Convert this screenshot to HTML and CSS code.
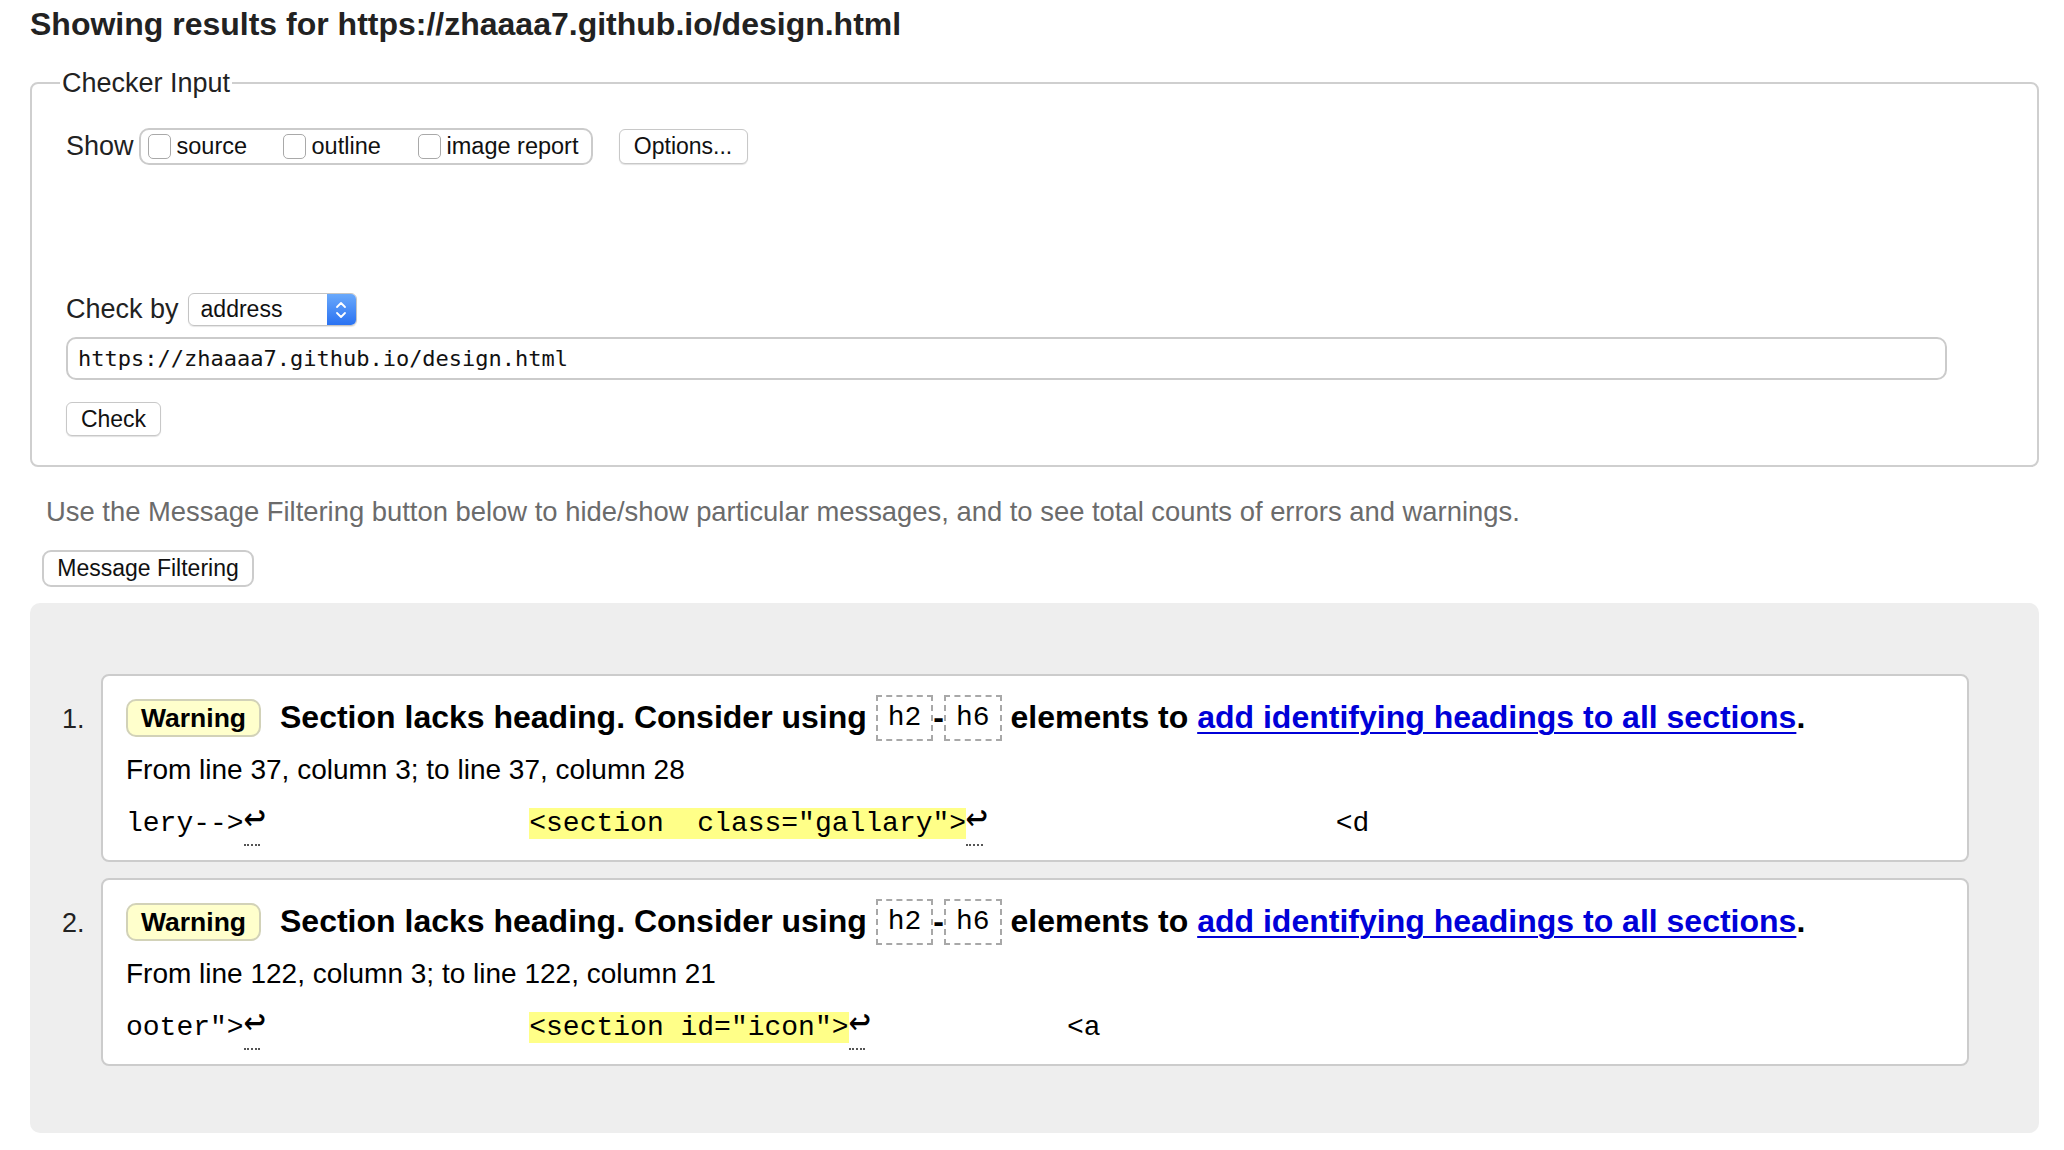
FILE: index.html
```html
<!DOCTYPE html>
<html lang="en">
<head>
<meta charset="utf-8">
<title>Showing results for https://zhaaaa7.github.io/design.html</title>
<link rel="stylesheet" href="styles.css">
</head>
<body>
<h1 class="title">Showing results for https://zhaaaa7.github.io/design.html</h1>

<fieldset class="checker">
  <legend>Checker Input</legend>
  <div class="show-row">
    <span class="show-label">Show</span>
    <div class="show-group">
      <label class="opt"><span class="cb"></span>source</label>
      <label class="opt"><span class="cb"></span>outline</label>
      <label class="opt last"><span class="cb"></span>image report</label>
    </div>
    <button class="btn options-btn">Options...</button>
  </div>

  <div class="checkby-row">
    <span class="checkby-label">Check by</span>
    <div class="select">
      <span class="select-text">address</span>
      <span class="select-arrow">
        <svg width="12" height="20" viewBox="0 0 12 20" fill="none" stroke="#fff" stroke-width="1.8" stroke-linecap="round" stroke-linejoin="round">
          <path d="M2 7 L6 3 L10 7"/>
          <path d="M2 13 L6 17 L10 13"/>
        </svg>
      </span>
    </div>
  </div>

  <div class="url">https://zhaaaa7.github.io/design.html</div>

  <button class="btn check-btn">Check</button>
</fieldset>

<p class="info">Use the Message Filtering button below to hide/show particular messages, and to see total counts of errors and warnings.</p>

<button class="btn filter-btn">Message Filtering</button>

<ol class="results">
  <li class="item">
    <span class="num">1.</span>
    <div class="card">
      <p class="msg"><span class="badge">Warning</span>Section lacks heading. Consider using <code class="tag">h2</code>-<code class="tag">h6</code> elements to <a href="#" class="link">add identifying headings to all sections</a>.</p>
      <p class="where">From line 37, column 3; to line 37, column 28</p>
      <p class="extract">lery--&gt;<b class="lf"><i class="lf-glyph">↩</i></b>                <mark>&lt;section  class="gallary"&gt;</mark><b class="lf"><i class="lf-glyph">↩</i></b>                     &lt;d</p>
    </div>
  </li>
  <li class="item">
    <span class="num">2.</span>
    <div class="card">
      <p class="msg"><span class="badge">Warning</span>Section lacks heading. Consider using <code class="tag">h2</code>-<code class="tag">h6</code> elements to <a href="#" class="link">add identifying headings to all sections</a>.</p>
      <p class="where">From line 122, column 3; to line 122, column 21</p>
      <p class="extract">ooter"&gt;<b class="lf"><i class="lf-glyph">↩</i></b>                <mark>&lt;section id="icon"&gt;</mark><b class="lf"><i class="lf-glyph">↩</i></b>            &lt;a</p>
    </div>
  </li>
</ol>
</body>
</html>
```

FILE: styles.css
```css
body {
  margin: 0;
  font-family: "Liberation Sans", Arial, Helvetica, sans-serif;
  color: #111;
  background: #fff;
}

.title {
  margin: 6px 0 0 30px;
  font-size: 32px;
  line-height: 36px;
  font-weight: bold;
  color: #222;
}

.checker {
  margin: 25px 0 0 30px;
  width: 2009px;
  box-sizing: border-box;
  border: 2px solid #cfcfcf;
  border-radius: 8px;
  padding: 29px 34px 29px;
  min-inline-size: 0;
}

.checker legend {
  font-size: 27px;
  line-height: 32px;
  padding: 0 2px;
  margin-left: -6px;
  color: #222;
}

.show-row {
  display: flex;
  align-items: center;
  height: 37px;
}

.show-label {
  font-size: 27px;
  color: #222;
  margin-right: 5px;
}

.show-group {
  display: flex;
  align-items: center;
  box-sizing: border-box;
  height: 37px;
  width: 454px;
  border: 2px solid #cbcbcb;
  border-radius: 10px;
  padding-left: 7px;
}

.opt {
  display: flex;
  align-items: center;
  width: 135px;
  font-size: 23.5px;
  color: #111;
}

.opt.last {
  width: auto;
}

.cb {
  display: inline-block;
  width: 23px;
  height: 25px;
  box-sizing: border-box;
  border: 1.5px solid #a9a9a9;
  border-radius: 5px;
  background: #fff;
  margin-right: 6px;
}

.btn {
  display: block;
  box-sizing: border-box;
  font-family: "Liberation Sans", Arial, Helvetica, sans-serif;
  font-size: 23px;
  color: #111;
  background: #fff;
  border: 1.5px solid #c8c8c8;
  border-radius: 6px;
  box-shadow: 0 1px 1px rgba(0, 0, 0, 0.12);
  padding: 0;
}

.options-btn {
  margin-left: 26px;
  width: 129px;
  height: 35px;
}

.checkby-row {
  margin-top: 128px;
  display: flex;
  align-items: center;
  height: 33px;
}

.checkby-label {
  font-size: 27px;
  color: #222;
  margin-right: 9px;
}

.select {
  display: flex;
  width: 169px;
  height: 33px;
  box-sizing: border-box;
  border: 1px solid #c4c4c4;
  border-radius: 6px;
  box-shadow: 0 1px 1px rgba(0, 0, 0, 0.1);
  overflow: hidden;
}

.select-text {
  flex: 1;
  font-size: 23px;
  line-height: 31px;
  padding-left: 12px;
  color: #111;
}

.select-arrow {
  width: 29px;
  display: flex;
  align-items: center;
  justify-content: center;
  background: linear-gradient(#6aa9fb, #2a72f2);
}

.url {
  margin-top: 11px;
  width: 1881px;
  height: 43px;
  box-sizing: border-box;
  border: 2px solid #cbcbcb;
  border-radius: 10px;
  font-family: "DejaVu Sans Mono", "Liberation Mono", monospace;
  font-size: 22px;
  line-height: 39px;
  padding-left: 10px;
  color: #111;
}

.check-btn {
  margin-top: 22px;
  width: 95px;
  height: 34px;
}

.info {
  margin: 29px 0 0 46px;
  font-size: 27.4px;
  line-height: 32px;
  color: #6b6b6b;
}

.filter-btn {
  margin: 22px 0 0 42px;
  width: 212px;
  height: 37px;
  border: 2px solid #cccccc;
  border-radius: 9px;
  box-shadow: none;
}

.results {
  margin: 16px 0 0 30px;
  width: 2009px;
  box-sizing: border-box;
  background: #eeeeee;
  border-radius: 10px;
  padding: 71px 70px 67px 32px;
  list-style: none;
}

.item {
  display: flex;
}

.item + .item {
  margin-top: 16px;
}

.num {
  width: 39px;
  flex: none;
  padding-top: 22px;
  font-size: 27px;
  line-height: 46px;
  color: #222;
}

.card {
  flex: 1;
  background: #fff;
  border: 2px solid #cccccc;
  border-radius: 8px;
  padding: 18px 23px 19px;
}

.card p {
  margin: 0;
}

.msg {
  height: 46px;
  font-size: 32px;
  line-height: 46px;
  font-weight: bold;
  white-space: nowrap;
  color: #000;
}

.badge {
  display: inline-block;
  vertical-align: middle;
  height: 38px;
  box-sizing: border-box;
  line-height: 34px;
  padding: 0 13px;
  margin-right: 19px;
  font-size: 26.5px;
  background: #ffffcc;
  border: 2px solid #d2d2b8;
  border-radius: 10px;
  position: relative;
  top: -2px;
}

.tag {
  display: inline-block;
  vertical-align: middle;
  box-sizing: border-box;
  height: 46px;
  font-family: "Liberation Mono", "Courier New", monospace;
  font-weight: normal;
  font-size: 28px;
  line-height: 42px;
  padding: 0 10px;
  border: 2px dashed #a8a8a8;
  position: relative;
  top: -2px;
}

.link {
  color: #0000d8;
  text-decoration: underline;
  text-decoration-thickness: 2px;
  text-underline-offset: 4px;
}

.where {
  margin-top: 13px !important;
  font-size: 28px;
  line-height: 34px;
  color: #000;
}

.extract {
  margin-top: 18px !important;
  font-family: "Liberation Mono", "Courier New", monospace;
  font-size: 28px;
  line-height: 34px;
  white-space: pre;
  color: #000;
}

.extract mark {
  background: #ffff88;
  color: inherit;
}

.lf {
  position: relative;
  display: inline-block;
  width: 16.8px;
  line-height: 34px;
  font-weight: normal;
  vertical-align: baseline;
}

.lf::after {
  content: "";
  position: absolute;
  left: 0;
  right: 0;
  bottom: -5px;
  border-bottom: 2px dotted #555;
}

.lf-glyph {
  display: inline-block;
  font-style: normal;
  font-family: "DejaVu Sans Mono", monospace;
  font-size: 28px;
  transform: scale(1.3, 1.45);
  transform-origin: 5% 75%;
}
```
